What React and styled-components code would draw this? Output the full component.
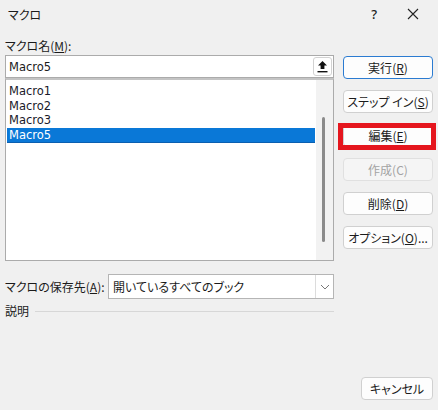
import React from "react";
import styled, { createGlobalStyle, css } from "styled-components";

const GlobalStyle = createGlobalStyle`
  html, body {
    margin: 0;
    padding: 0;
    background: #f0f0f0;
  }
  body {
    font-family: "Noto Sans CJK JP", "Noto Sans", sans-serif;
    font-feature-settings: "palt" 1;
    color: #1b1b1b;
  }
`;

const macros = ["Macro1", "Macro2", "Macro3", "Macro5"];

const buttons = [
  { label: "実行", key: "R", primary: true },
  { label: "ステップ イン", key: "S" },
  { label: "編集", key: "E", marked: true },
  { label: "作成", key: "C", disabled: true },
  { label: "削除", key: "D" },
  { label: "オプション", key: "O", tail: "..." },
];

function Mnemonic({ label, k, tail, plain }) {
  return (
    <>
      {label}({plain ? k : <u>{k}</u>}){tail}
    </>
  );
}

function App() {
  return (
    <Dialog>
      <GlobalStyle />
      <TitleBar>
        <Title>マクロ</Title>
        <TitleIcons>
          <Help>?</Help>
          <CloseIcon width="12" height="12" viewBox="0 0 12 12">
            <path d="M1 1 L11 11 M11 1 L1 11" stroke="#222" strokeWidth="1.1" fill="none" />
          </CloseIcon>
        </TitleIcons>
      </TitleBar>

      <Body>
        <LeftCol>
          <Label>
            マクロ名(<u>M</u>):
          </Label>
          <NameInput>
            <InputText>Macro5</InputText>
            <PickButton>
              <svg width="11" height="13" viewBox="0 0 11 13">
                <path d="M5.5 1 L1 5.5 H3.6 V9 H7.4 V5.5 H10 Z" fill="#111" />
                <rect x="0.5" y="11" width="10" height="1.4" fill="#111" />
              </svg>
            </PickButton>
          </NameInput>
          <ListBox>
            <Items>
              {macros.map((m) => (
                <Item key={m} $selected={m === "Macro5"}>
                  {m}
                </Item>
              ))}
            </Items>
            <ScrollTrack>
              <Thumb />
            </ScrollTrack>
          </ListBox>

          <LocationRow>
            <Label>
              マクロの保存先(<u>A</u>):
            </Label>
            <Select>
              <SelectText>開いているすべてのブック</SelectText>
              <Chevron>
                <svg width="10" height="6" viewBox="0 0 10 6">
                  <path d="M1 1 L5 5 L9 1" stroke="#777" strokeWidth="1" fill="none" />
                </svg>
              </Chevron>
            </Select>
          </LocationRow>

          <DescRow>
            <DescLabel>説明</DescLabel>
            <Rule />
          </DescRow>
        </LeftCol>

        <RightCol>
          {buttons.map((b) => (
            <Button
              key={b.key}
              $primary={b.primary}
              $marked={b.marked}
              disabled={b.disabled}
            >
              <Mnemonic label={b.label} k={b.key} tail={b.tail} plain={b.disabled} />
            </Button>
          ))}
        </RightCol>
      </Body>

      <Footer>
        <CancelButton>キャンセル</CancelButton>
      </Footer>
    </Dialog>
  );
}

export default App;

const Dialog = styled.div`
  width: 438px;
  height: 410px;
  background: #f0f0f0;
  display: flex;
  flex-direction: column;
  overflow: hidden;
`;

const TitleBar = styled.div`
  height: 30px;
  display: flex;
  align-items: center;
  justify-content: space-between;
  padding: 0 0 2px 8px;
  box-sizing: border-box;
`;

const Title = styled.span`
  font-size: 12px;
`;

const TitleIcons = styled.div`
  display: flex;
  align-items: center;
  gap: 30px;
  padding-right: 19px;
`;

const Help = styled.span`
  font-family: "Noto Sans", sans-serif;
  font-size: 13px;
  font-weight: 500;
`;

const CloseIcon = styled.svg`
  display: block;
`;

const Body = styled.div`
  display: flex;
  gap: 9px;
  padding: 0 5px;
`;

const LeftCol = styled.div`
  width: 329px;
  display: flex;
  flex-direction: column;
`;

const Label = styled.div`
  font-size: 12px;
  line-height: 18px;
  height: 18px;
  margin-top: 7px;
  white-space: nowrap;
`;

const NameInput = styled.div`
  height: 23px;
  box-sizing: border-box;
  background: #fff;
  border: 1px solid #ababab;
  display: flex;
  align-items: center;
  justify-content: space-between;
  padding: 0 1px 0 3px;
`;

const InputText = styled.span`
  font-family: "DejaVu Sans", sans-serif;
  font-size: 11.5px;
`;

const PickButton = styled.div`
  width: 19px;
  height: 19px;
  box-sizing: border-box;
  border: 1px solid #d2d2d2;
  border-radius: 3px;
  background: #fff;
  display: flex;
  align-items: center;
  justify-content: center;
`;

const ListBox = styled.div`
  height: 183px;
  box-sizing: border-box;
  border: 1px solid #ababab;
  border-top: 2px solid #c4c4c4;
  background: #fff;
  display: flex;
`;

const Items = styled.div`
  flex: 1;
  padding: 4px 1px 0 1px;
`;

const Item = styled.div`
  font-family: "DejaVu Sans", sans-serif;
  font-size: 11.5px;
  height: 14.5px;
  line-height: 14.5px;
  padding-left: 2px;
  color: ${(p) => (p.$selected ? "#fff" : "#1a1a2a")};
  background: ${(p) => (p.$selected ? "#0a78d7" : "transparent")};
  border-bottom: ${(p) => (p.$selected ? "1px solid #0a5fb0" : "0")};
`;

const ScrollTrack = styled.div`
  width: 17px;
  background: #f2f2f2;
  position: relative;
`;

const Thumb = styled.div`
  position: absolute;
  left: 6px;
  top: 37px;
  width: 3px;
  height: 125px;
  border-radius: 2px;
  background: #8b8b8b;
`;

const LocationRow = styled.div`
  display: flex;
  align-items: center;
  margin-top: 13px;
  gap: 6px;

  ${Label} {
    margin-top: 0;
    width: 97px;
  }
`;

const Select = styled.div`
  flex: 1;
  height: 25px;
  box-sizing: border-box;
  background: #fff;
  border: 1px solid #b5b5b5;
  display: flex;
  align-items: stretch;
`;

const SelectText = styled.span`
  flex: 1;
  font-size: 12px;
  display: flex;
  align-items: center;
  padding-left: 4px;
`;

const Chevron = styled.span`
  width: 17px;
  border-left: 1px solid #dcdcdc;
  display: flex;
  align-items: center;
  justify-content: center;
`;

const DescRow = styled.div`
  display: flex;
  align-items: center;
  gap: 6px;
  margin-top: 3px;
`;

const DescLabel = styled.span`
  font-size: 12px;
  line-height: 18px;
`;

const Rule = styled.div`
  flex: 1;
  height: 1px;
  background: #d7d7d7;
`;

const RightCol = styled.div`
  width: 90px;
  padding-top: 26px;
  display: flex;
  flex-direction: column;
  gap: 11px;
`;

const marker = css`
  &::after {
    content: "";
    position: absolute;
    top: -2px;
    bottom: -4px;
    left: -6px;
    right: -4px;
    border: 5px solid #e5161e;
    pointer-events: none;
  }
`;

const Button = styled.button`
  position: relative;
  height: 23px;
  box-sizing: border-box;
  padding: 0;
  font-family: inherit;
  font-feature-settings: "palt" 1;
  font-size: 12px;
  color: ${(p) => (p.disabled ? "#a3a3a3" : "#1b1b1b")};
  background: ${(p) => (p.disabled ? "#f5f5f5" : "#fdfdfd")};
  border: 1px solid
    ${(p) => (p.$primary ? "#2b7bd1" : p.disabled ? "#e0e0e0" : "#d0d0d0")};
  border-radius: 4px;
  white-space: nowrap;

  u {
    text-underline-offset: 1px;
  }

  ${(p) => p.$marked && marker}
`;

const Footer = styled.div`
  margin-top: auto;
  display: flex;
  justify-content: flex-end;
  padding: 0 5px 10px 0;
`;

const CancelButton = styled(Button)`
  width: 72px;
`;
